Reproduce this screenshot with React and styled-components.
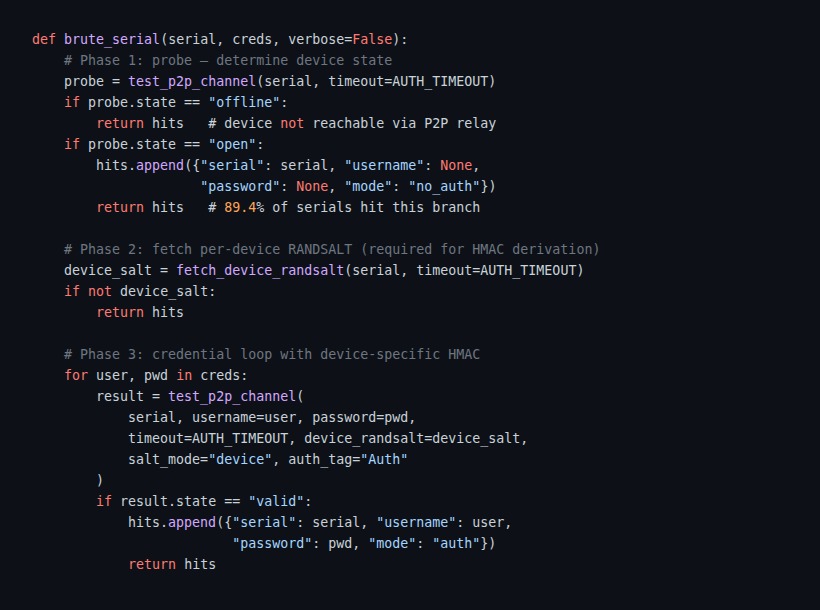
import React from 'react';
import styled, { createGlobalStyle } from 'styled-components';

const Global = createGlobalStyle`
  html, body {
    margin: 0;
    padding: 0;
    background: #0d1117;
  }
`;

const colors = {
  kw: '#ff7b72',
  fn: '#d2a8ff',
  str: '#a5d6ff',
  num: '#ffa657',
  com: '#6e7681',
  txt: '#c9d1d9',
};

const Block = styled.pre`
  margin: 0;
  padding: 29px 32px;
  min-height: 610px;
  box-sizing: border-box;
  background: #0d1117;
  color: #c9d1d9;
  font-family: 'DejaVu Sans Mono', 'Liberation Mono', monospace;
  font-size: 13.3px;
  line-height: 21px;
`;

const Line = styled.div`
  height: 21px;
  white-space: pre;
`;

const Tok = styled.span`
  color: ${(p) => colors[p.$kind] || colors.txt};
`;

const K = (t) => ['kw', t];
const F = (t) => ['fn', t];
const S = (t) => ['str', t];
const N = (t) => ['num', t];
const C = (t) => ['com', t];
const T = (t) => ['txt', t];

const code = [
  [K('def'), T(' '), F('brute_serial'), T('(serial, creds, verbose='), K('False'), T('):')],
  [T('    '), C('# Phase 1: probe — determine device state')],
  [T('    probe = '), F('test_p2p_channel'), T('(serial, timeout=AUTH_TIMEOUT)')],
  [T('    '), K('if'), T(' probe.state == '), S('"offline"'), T(':')],
  [T('        '), K('return'), T(' hits   # device '), K('not'), T(' reachable via P2P relay')],
  [T('    '), K('if'), T(' probe.state == '), S('"open"'), T(':')],
  [T('        hits.'), F('append'), T('({'), S('"serial"'), T(': serial, '), S('"username"'), T(': '), K('None'), T(',')],
  [T('                     '), S('"password"'), T(': '), K('None'), T(', '), S('"mode"'), T(': '), S('"no_auth"'), T('})')],
  [T('        '), K('return'), T(' hits   # '), N('89.4'), T('% of serials hit this branch')],
  [],
  [T('    '), C('# Phase 2: fetch per-device RANDSALT (required for HMAC derivation)')],
  [T('    device_salt = '), F('fetch_device_randsalt'), T('(serial, timeout=AUTH_TIMEOUT)')],
  [T('    '), K('if'), T(' '), K('not'), T(' device_salt:')],
  [T('        '), K('return'), T(' hits')],
  [],
  [T('    '), C('# Phase 3: credential loop with device-specific HMAC')],
  [T('    '), K('for'), T(' user, pwd '), K('in'), T(' creds:')],
  [T('        result = '), F('test_p2p_channel'), T('(')],
  [T('            serial, username=user, password=pwd,')],
  [T('            timeout=AUTH_TIMEOUT, device_randsalt=device_salt,')],
  [T('            salt_mode='), S('"device"'), T(', auth_tag='), S('"Auth"')],
  [T('        )')],
  [T('        '), K('if'), T(' result.state == '), S('"valid"'), T(':')],
  [T('            hits.'), F('append'), T('({'), S('"serial"'), T(': serial, '), S('"username"'), T(': user,')],
  [T('                         '), S('"password"'), T(': pwd, '), S('"mode"'), T(': '), S('"auth"'), T('})')],
  [T('            '), K('return'), T(' hits')],
];

const App = () => {
  return (
    <>
      <Global />
      <Block>
        {code.map((line, i) => (
          <Line key={i}>
            {line.length === 0
              ? ' '
              : line.map(([kind, text], j) => (
                  <Tok key={j} $kind={kind}>
                    {text}
                  </Tok>
                ))}
          </Line>
        ))}
      </Block>
    </>
  );
};

export default App;
